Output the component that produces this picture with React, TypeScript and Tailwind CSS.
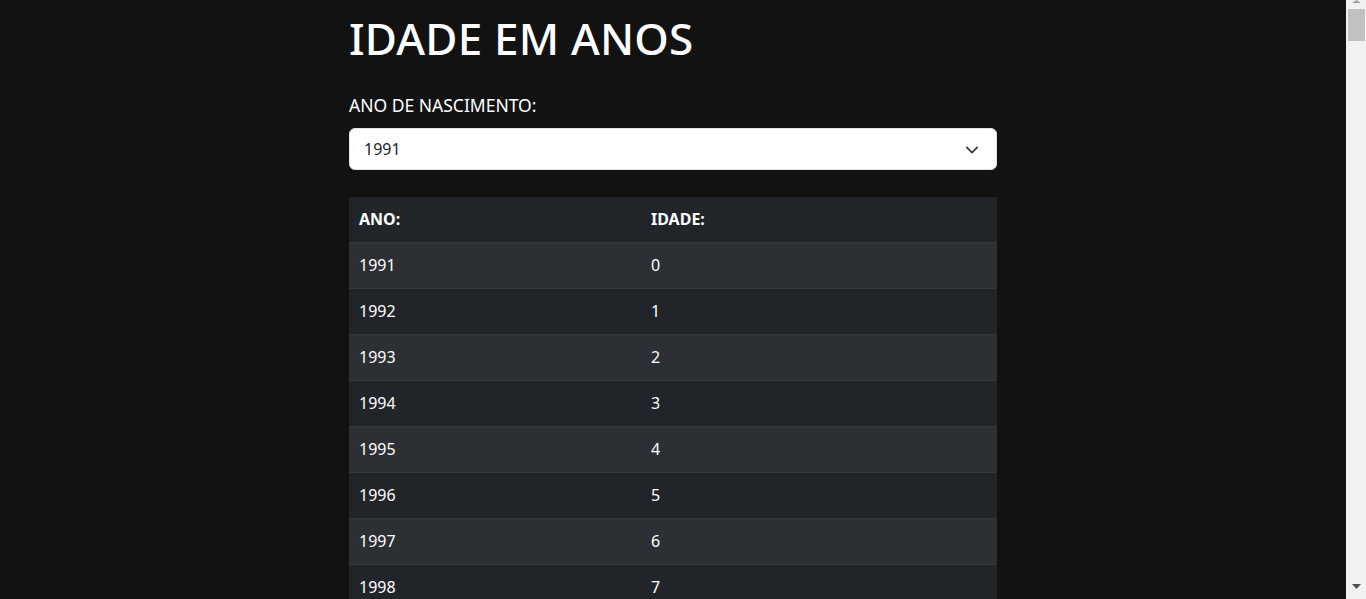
import React from "react";

export default function App() {
  const rows = Array.from({ length: 8 }, (_, i) => ({ ano: 1991 + i, idade: i }));
  return (
    <div
      className="flex h-screen overflow-hidden bg-[#121212] text-white"
      style={{ fontFamily: '"Segoe UI", "Noto Sans", sans-serif' }}
    >
      <div className="flex-1 overflow-hidden">
        <div className="mx-auto w-[648px] pt-[12px]">
          <h1 className="text-[44px] leading-[1.2] font-medium mb-[28px] tracking-[0.2px]">IDADE EM ANOS</h1>
          <label className="block text-[17.5px] leading-[24px] mb-[11px]">ANO DE NASCIMENTO:</label>
          <div className="relative h-[42px] rounded-[6px] border border-[#dee2e6] bg-white text-[#212529] flex items-center pl-[14px] text-[16px]">
            <span>1991</span>
            <svg className="absolute right-[17px] top-[14px]" width="14" height="14" viewBox="0 0 16 16" fill="none">
              <path d="M2 5l6 6 6-6" stroke="#343a40" strokeWidth="2" strokeLinecap="round" strokeLinejoin="round" />
            </svg>
          </div>
          <div className="mt-[27px] bg-[#212529] text-[16px]">
            <div className="grid grid-cols-[292px_1fr] h-[46px] items-center border-b border-[#32383e] font-bold">
              <div className="pl-[10px]">ANO:</div>
              <div className="pl-[10px]">IDADE:</div>
            </div>
            {rows.map((r, i) => (
              <div
                key={r.ano}
                className={
                  "grid grid-cols-[292px_1fr] h-[46px] items-center border-b border-[#32383e] " +
                  (i % 2 === 0 ? "bg-[#2c3034]" : "bg-[#212529]")
                }
              >
                <div className="pl-[10px]">{r.ano}</div>
                <div className="pl-[10px]">{r.idade}</div>
              </div>
            ))}
          </div>
        </div>
      </div>
      <div className="w-[20px] shrink-0 bg-[#f1f1f1] flex flex-col">
        <div className="h-[9px] w-full flex justify-center items-start pl-[1px]">
          <svg width="9" height="3" viewBox="0 0 9 3"><path d="M0 3L4.5 0L9 3Z" fill="#a3a3a3" /></svg>
        </div>
        <div className="h-[32px] w-[17px] ml-[2px] bg-[#c1c1c1]" />
        <div className="flex-1" />
        <div className="h-[15px] w-full flex justify-center items-start pl-[1px]">
          <svg width="9" height="5" viewBox="0 0 9 5"><path d="M0 0H9L4.5 5Z" fill="#505050" /></svg>
        </div>
      </div>
    </div>
  );
}
